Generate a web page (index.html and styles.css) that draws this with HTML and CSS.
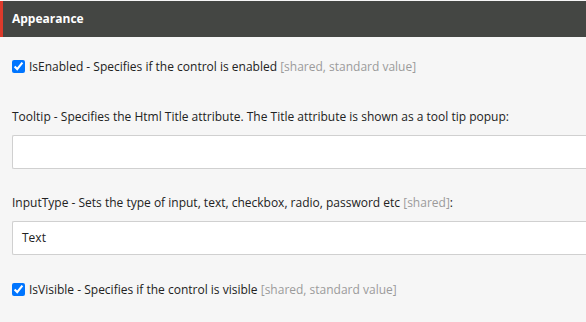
FILE: index.html
```html
<!DOCTYPE html>
<html>
<head>
<meta charset="utf-8">
<link rel="stylesheet" href="styles.css">
</head>
<body>
<div class="section">
  <div class="section-header">Appearance</div>
  <div class="section-body">
    <label class="check-row">
      <input type="checkbox" checked>
      <span>IsEnabled - Specifies if the control is enabled <span class="meta">[shared, standard value]</span></span>
    </label>
    <div class="field first">
      <div class="field-label">Tooltip - Specifies the Html Title attribute. The Title attribute is shown as a tool tip popup:</div>
      <div class="text-input"></div>
    </div>
    <div class="field">
      <div class="field-label">InputType - Sets the type of input, text, checkbox, radio, password etc <span class="meta">[shared]</span>:</div>
      <div class="text-input">Text</div>
    </div>
    <label class="check-row last">
      <input type="checkbox" checked>
      <span>IsVisible - Specifies if the control is visible <span class="meta">[shared, standard value]</span></span>
    </label>
  </div>
</div>
</body>
</html>
```
FILE: styles.css
```css
html, body {
  margin: 0;
  padding: 0;
  background: #f6f6f6;
}
body {
  font-family: "Open Sans", "Noto Sans", sans-serif;
  font-size: 12px;
  color: #222;
}
.section {
  padding-top: 1px;
}
.section-header {
  height: 36px;
  background: #444643;
  border-left: 3px solid #dc3a2b;
  color: #fff;
  font-weight: bold;
  font-size: 12px;
  line-height: 36px;
  padding-left: 9px;
}
.section-body {
  padding: 21px 0 0 12px;
}
.check-row {
  display: flex;
  align-items: center;
  gap: 4px;
  height: 16px;
}
.check-row input {
  margin: 0;
  width: 13px;
  height: 13px;
  accent-color: #0075ff;
}
.meta {
  color: #9b9b9b;
}
.field {
  margin-top: 26px;
}
.field.first {
  margin-top: 35px;
}
.field-label {
  line-height: 16px;
}
.text-input {
  margin-top: 10px;
  height: 32px;
  background: #fff;
  border: 1px solid #d0d0d0;
  border-right: none;
  border-radius: 2px 0 0 2px;
  padding-left: 9px;
  line-height: 32px;
  font-size: 12px;
}
.check-row.last {
  margin-top: 26px;
}
```
